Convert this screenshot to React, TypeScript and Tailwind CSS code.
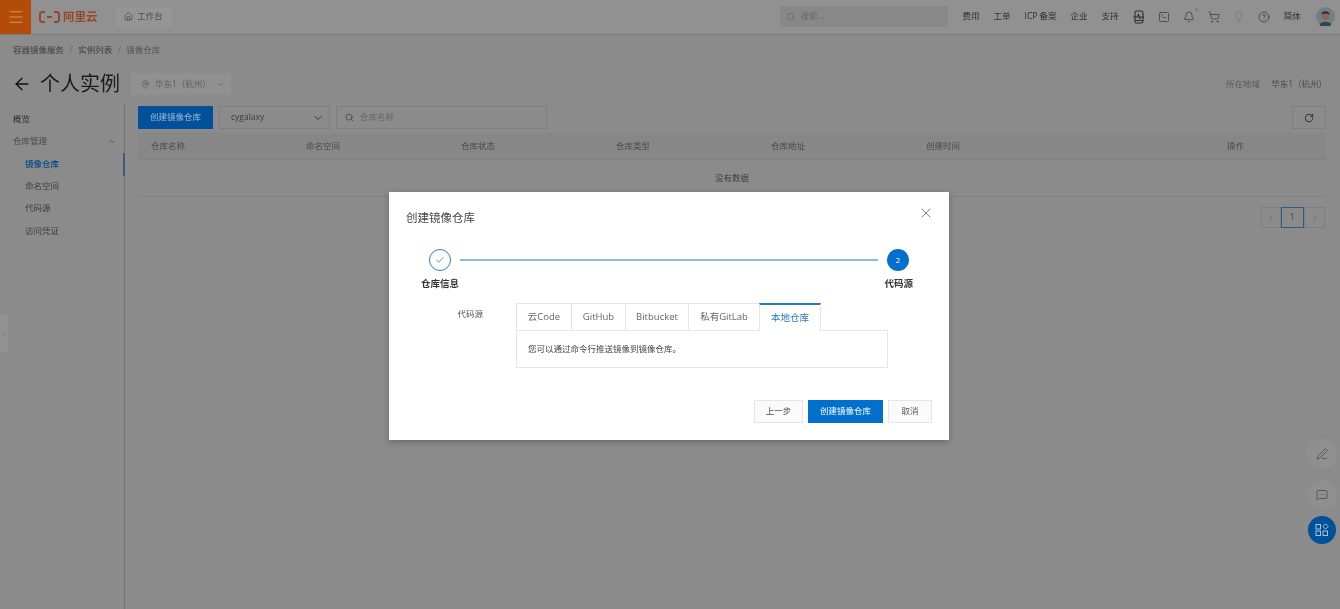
import { ArrowLeft, Bell, ChevronDown, ChevronLeft, ChevronRight, ChevronUp, CircleHelp, Check, Home, Lightbulb, Menu, MessageSquareMore, PenLine, RotateCw, Search, ShoppingCart, SquareTerminal, X, MapPin } from "lucide-react";

const nav = ["费用", "工单", "ICP 备案", "企业", "支持"];
const columns = ["仓库名称", "命名空间", "仓库状态", "仓库类型", "仓库地址", "创建时间", "操作"];
const tabs = [
  { label: "云Code", w: "w-[55px]" },
  { label: "GitHub", w: "w-[54px]" },
  { label: "Bitbucket", w: "w-[63px]" },
  { label: "私有GitLab", w: "w-[71px]" },
];

function Avatar() {
  return (
    <svg width="19" height="19" viewBox="0 0 19 19" className="ml-[15px]">
      <circle cx="9.5" cy="9.5" r="9.5" fill="#6f8088" />
      <circle cx="9.5" cy="8.500" r="4" fill="#8a6650" />
      <path d="M5.500 7.500c0-4.500 8-4.500 8 0-2-1.500-6-1.500-8 0z" fill="#2e2a28" />
      <path d="M3.500 18c1-4.500 11-4.500 12 0a9.500 9.500 0 0 1-12 0z" fill="#3c4145" />
    </svg>
  );
}

function PhoneIcon() {
  return (
    <svg width="12" height="14" viewBox="0 0 12 14" fill="none" stroke="currentColor" strokeWidth="1.1">
      <rect x="2" y="1" width="8" height="12" rx="1.500" />
      <path d="M0.500 7h4l1-2.500 1.500 4 1-1.500h3M2 10.500h8" />
    </svg>
  );
}

function AppsIcon() {
  return (
    <svg width="14" height="14" viewBox="0 0 14 14" fill="none" stroke="currentColor" strokeWidth="1">
      <rect x="1" y="1.500" width="4.500" height="4.500" />
      <rect x="1" y="8" width="4.500" height="4.500" />
      <rect x="8" y="8" width="4.500" height="4.500" />
      <path d="M10.500 0.800l2.700 2.700-2.700 2.700-2.700-2.700z" />
    </svg>
  );
}

export default function App() {
  return (
    <div className="relative flex h-[609px] w-[1340px] flex-col overflow-hidden bg-[#8b8b8b] font-['Open_Sans','Noto_Sans_CJK_SC',sans-serif] text-[8.5px] text-[#3c3c3c] blur-[0.3px]">
      {/* top bar */}
      <header className="flex h-[35px] shrink-0 items-center border-b border-[#7c7c7c] bg-[#919191] pb-px">
        <div className="flex h-[34px] w-[31px] items-center justify-center bg-[#b34c08]">
          <Menu size={18} strokeWidth={1.5} className="text-[#d0986c]" />
        </div>
        <div className="ml-2 flex items-center gap-[3px] text-[#96482a]">
          <svg width="21" height="12" viewBox="0 0 21 12" fill="none" stroke="#96482a" strokeWidth="2">
            <path d="M6 1H2.500L1 2.500v7L2.500 11H6M15 1h3.500L20 2.500v7L18.500 11H15M8 6h5" />
          </svg>
          <span className="text-[11.500px] font-bold leading-none">阿里云</span>
        </div>
        <div className="ml-[18px] flex h-5 w-[56px] items-center justify-center gap-[4px] bg-[#959595] text-[#4e4e4e]">
          <Home size={9} />
          <span>工作台</span>
        </div>
        <div className="ml-[608px] flex h-[21px] w-[168px] items-center gap-[5px] bg-[#888888] pl-[6px] text-[#6a6a6a]">
          <Search size={10} />
          <span>搜索...</span>
        </div>
        <div className="ml-[15px] flex items-center gap-[14px] text-[#2f2f2f]">
          {nav.map((n) => (
            <span key={n}>{n}</span>
          ))}
        </div>
        <div className="ml-[14px] flex items-center gap-[13px] text-[#2f2f2f]">
          <PhoneIcon />
          <SquareTerminal size={12} strokeWidth={1.3} />
          <span className="relative flex">
            <Bell size={12} strokeWidth={1.3} />
            <span className="absolute -right-[3px] -top-[3px] h-[3px] w-[3px] rounded-full bg-[#b06a3c]" />
          </span>
          <ShoppingCart size={12} strokeWidth={1.3} />
          <Lightbulb size={12} strokeWidth={1.3} className="text-[#707070]" />
          <CircleHelp size={12} strokeWidth={1.3} />
        </div>
        <span className="ml-[14px] text-[#2f2f2f]">简体</span>
        <Avatar />
      </header>

      {/* breadcrumb */}
      <div className="flex h-[30px] shrink-0 items-center gap-[5.500px] pl-[13px] text-[#3c3c3c]">
        <span>容器镜像服务</span>
        <span className="text-[#666]">/</span>
        <span>实例列表</span>
        <span className="text-[#666]">/</span>
        <span className="text-[#555]">镜像仓库</span>
      </div>

      {/* title */}
      <div className="flex h-[36px] shrink-0 items-center pl-[12px] pr-[19px] pt-[2px]">
        <ArrowLeft size={20} strokeWidth={1.6} className="text-[#111]" />
        <h1 className="ml-[8px] text-[20px] font-normal leading-none text-[#1c1c1c]">个人实例</h1>
        <div className="ml-[11px] flex h-[22px] w-[100px] items-center gap-[5px] bg-[#909090] pl-[10px] text-[#5e5e5e]">
          <MapPin size={9} />
          <span>华东1（杭州）</span>
          <ChevronDown size={9} />
        </div>
        <span className="ml-auto mr-[-6px] text-[#5a5a5a]">所在地域</span>
        <span className="ml-[17px] mr-[-6px] text-[#4a4a4a]">华东1（杭州）</span>
      </div>

      {/* body */}
      <div className="flex min-h-0 flex-1">
        <aside className="relative mt-[3px] w-[125px] shrink-0 border-r border-[#747474] pt-[4px]">
          <div className="flex h-[22.400px] items-center pl-[13px] text-[#2a2a2a]">概览</div>
          <div className="flex h-[22.400px] items-center justify-between pl-[13px] pr-[8px] text-[#4a4a4a]">
            <span>仓库管理</span>
            <ChevronUp size={9} />
          </div>
          <div className="relative flex h-[22.400px] items-center pl-[25px] font-medium text-[#00478a]">
            镜像仓库
            <span className="absolute right-[-1px] top-0 h-[23px] w-[2px] bg-[#3d5c7a]" />
          </div>
          <div className="flex h-[22.400px] items-center pl-[25px]">命名空间</div>
          <div className="flex h-[22.400px] items-center pl-[25px]">代码源</div>
          <div className="flex h-[22.400px] items-center pl-[25px]">访问凭证</div>
        </aside>

        <main className="w-[1201px] shrink-0 pl-[13px] pt-[5px] text-[#4a4a4a]">
          <div className="flex h-[23px] w-[1188px] items-center">
            <div className="flex h-[23px] w-[75px] items-center justify-center bg-[#00509a] text-[#9dbcd8]">创建镜像仓库</div>
            <div className="ml-[6px] flex h-[23px] w-[111px] items-center justify-between border border-[#7e7e7e] pl-[11px] pr-[5px] text-[#3c3c3c]">
              <span>cygalaxy</span>
              <ChevronDown size={12} />
            </div>
            <div className="ml-[6px] flex h-[23px] w-[211px] items-center gap-[6px] border border-[#7e7e7e] pl-[8px] text-[#666]">
              <Search size={9} className="text-[#444]" />
              <span>仓库名称</span>
            </div>
            <div className="ml-auto flex h-[23px] w-[34px] items-center justify-center border border-[#7e7e7e] text-[#222]">
              <RotateCw size={10} strokeWidth={2} />
            </div>
          </div>
          <div className="mt-[4px] grid h-[27px] w-[1188px] grid-cols-[155px_155px_155px_155px_155px_301px_1fr] items-center border-b border-[#818181] bg-[#878787] pl-[13px] text-[#4a4a4a]">
            {columns.map((c) => (
              <span key={c}>{c}</span>
            ))}
          </div>
          <div className="flex h-[37px] w-[1188px] items-center justify-center border-b border-[#818181] text-[#3c3c3c]">没有数据</div>
          <div className="mt-[10px] flex h-[21px] w-[1187px] justify-end">
            <div className="flex w-[20px] items-center justify-center border border-[#7e7e7e] text-[#6c6c6c]"><ChevronLeft size={10} /></div>
            <div className="flex w-[23px] items-center justify-center border border-[#2f5a85] text-[#2f4d6b]">1</div>
            <div className="flex w-[21px] items-center justify-center border border-[#7e7e7e] text-[#6c6c6c]"><ChevronRight size={10} /></div>
          </div>
        </main>
      </div>

      {/* edge handle */}
      <div className="absolute left-0 top-[315px] flex h-[37px] w-[8px] items-center bg-[#929292] text-[#777]">
        <ChevronRight size={8} />
      </div>

      {/* floating buttons */}
      <div className="absolute left-[1307px] top-[439px] flex h-[30px] w-[30px] items-center justify-center rounded-full bg-[#8f8f8f] text-[#3c3c3c]">
        <PenLine size={12} strokeWidth={1.3} />
      </div>
      <div className="absolute left-[1307px] top-[480px] flex h-[30px] w-[30px] items-center justify-center rounded-full bg-[#8f8f8f] text-[#3c3c3c]">
        <MessageSquareMore size={12} strokeWidth={1.3} />
      </div>
      <div className="absolute left-[1308px] top-[516px] flex h-[28px] w-[28px] items-center justify-center rounded-full bg-[#00509a] text-[#a9c4dc]">
        <AppsIcon />
      </div>

      {/* dialog */}
      <div className="absolute left-[389px] top-[192px] h-[248px] w-[560px] bg-white shadow-[0_2px_6px_rgba(0,0,0,0.25)]">
        <div className="flex items-start justify-between pl-[17px] pr-[15px] pt-[16px]">
          <h2 className="text-[11.500px] font-normal leading-[20px] text-[#444]">创建镜像仓库</h2>
          <X size={16} strokeWidth={1.1} className="mt-[-3px] text-[#555]" />
        </div>

        {/* stepper */}
        <div className="mt-[21px] flex items-center pl-[40px] pr-[40px]">
          <div className="flex h-[22px] w-[22px] shrink-0 items-center justify-center rounded-full border border-[#2f80c8]">
            <Check size={10} strokeWidth={1.8} className="text-[#1f74c0]" />
          </div>
          <div className="mx-[9px] h-[1.500px] flex-1 bg-[#8fb9d9]" />
          <div className="flex h-[22px] w-[22px] shrink-0 items-center justify-center rounded-full bg-[#0070cc] text-[8px] text-white">2</div>
        </div>
        <div className="mt-[6px] flex justify-between pl-[32px] pr-[36px] text-[9.500px] font-bold leading-[14px] text-[#333]">
          <span>仓库信息</span>
          <span>代码源</span>
        </div>

        {/* form */}
        <div className="mt-[12px] flex">
          <div className="w-[127px] pr-[33px] pt-[5px] text-right leading-[12px] text-[#555]">代码源</div>
          <div className="w-[372px]">
            <div className="flex h-[28px] text-[9.500px] text-[#666]">
              {tabs.map((t) => (
                <div key={t.label} className={`${t.w} flex items-center justify-center border-b border-l border-t border-[#e6e6e6]`}>{t.label}</div>
              ))}
              <div className="flex w-[62px] items-center justify-center border-x border-t-2 border-x-[#e6e6e6] border-t-[#2a78bd] text-[#2a78bd]">本地仓库</div>
              <div className="flex-1 border-b border-[#e6e6e6]" />
            </div>
            <div className="flex h-[37px] items-center border-x border-b border-[#e6e6e6] pl-[11px] text-[#444]">
              您可以通过命令行推送镜像到镜像仓库。
            </div>
          </div>
        </div>

        {/* actions */}
        <div className="mt-[32px] flex justify-end gap-[5px] pr-[17px]">
          <div className="flex h-[23px] w-[49px] items-center justify-center border border-[#e6e6e6] bg-[#fafafa] text-[#444]">上一步</div>
          <div className="flex h-[23px] w-[75px] items-center justify-center bg-[#0070cc] text-white">创建镜像仓库</div>
          <div className="flex h-[23px] w-[44px] items-center justify-center border border-[#e6e6e6] bg-[#fafafa] text-[#555]">取消</div>
        </div>
      </div>
    </div>
  );
}
